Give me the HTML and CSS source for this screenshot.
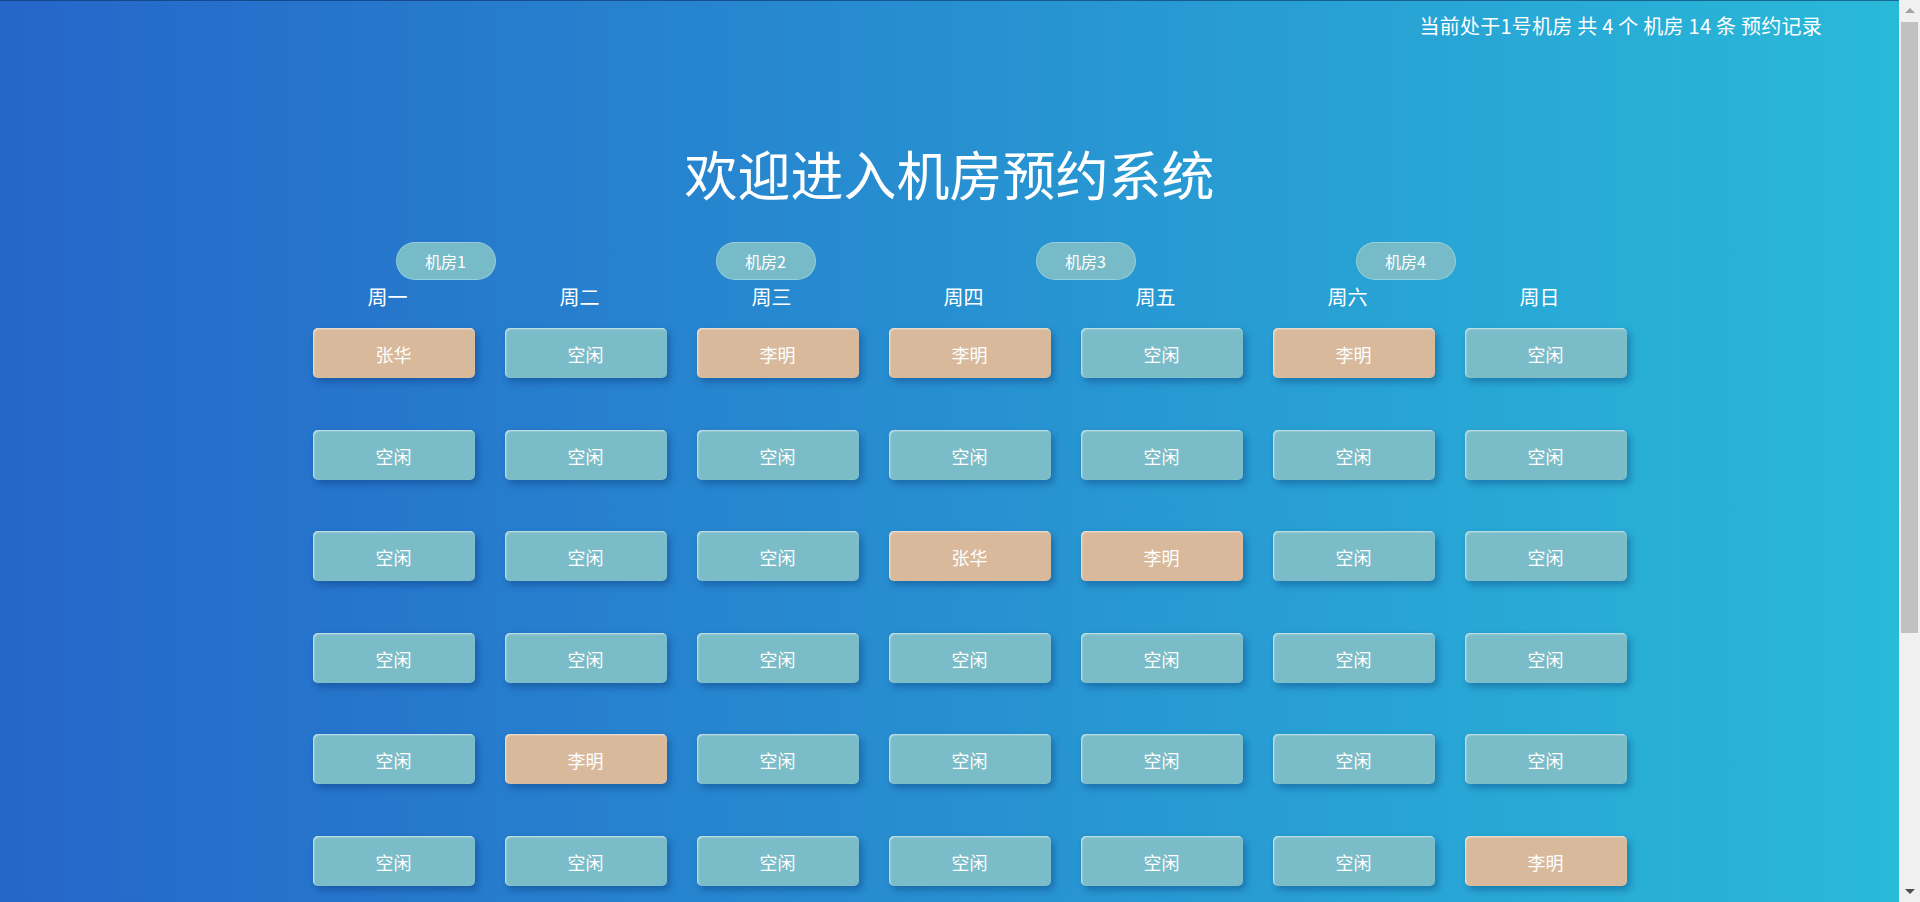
FILE: index.html
```html
<!DOCTYPE html>
<html lang="zh-CN">
<head>
<meta charset="utf-8">
<title>机房预约系统</title>
<link rel="stylesheet" href="styles.css">
</head>
<body>
<div class="page">
  <div class="topbar">当前处于1号机房 共 4 个 机房 14 条 预约记录</div>
  <h1 class="title">欢迎进入机房预约系统</h1>
  <div class="board">
    <div class="rooms">
      <div class="room-cell"><span class="room">机房1</span></div>
      <div class="room-cell"><span class="room">机房2</span></div>
      <div class="room-cell"><span class="room">机房3</span></div>
      <div class="room-cell"><span class="room">机房4</span></div>
    </div>
    <div class="days">
      <div class="day">周一</div>
      <div class="day">周二</div>
      <div class="day">周三</div>
      <div class="day">周四</div>
      <div class="day">周五</div>
      <div class="day">周六</div>
      <div class="day">周日</div>
    </div>
    <div class="grid">
      <div class="cell"><div class="slot booked">张华</div></div>
      <div class="cell"><div class="slot">空闲</div></div>
      <div class="cell"><div class="slot booked">李明</div></div>
      <div class="cell"><div class="slot booked">李明</div></div>
      <div class="cell"><div class="slot">空闲</div></div>
      <div class="cell"><div class="slot booked">李明</div></div>
      <div class="cell"><div class="slot">空闲</div></div>

      <div class="cell"><div class="slot">空闲</div></div>
      <div class="cell"><div class="slot">空闲</div></div>
      <div class="cell"><div class="slot">空闲</div></div>
      <div class="cell"><div class="slot">空闲</div></div>
      <div class="cell"><div class="slot">空闲</div></div>
      <div class="cell"><div class="slot">空闲</div></div>
      <div class="cell"><div class="slot">空闲</div></div>

      <div class="cell"><div class="slot">空闲</div></div>
      <div class="cell"><div class="slot">空闲</div></div>
      <div class="cell"><div class="slot">空闲</div></div>
      <div class="cell"><div class="slot booked">张华</div></div>
      <div class="cell"><div class="slot booked">李明</div></div>
      <div class="cell"><div class="slot">空闲</div></div>
      <div class="cell"><div class="slot">空闲</div></div>

      <div class="cell"><div class="slot">空闲</div></div>
      <div class="cell"><div class="slot">空闲</div></div>
      <div class="cell"><div class="slot">空闲</div></div>
      <div class="cell"><div class="slot">空闲</div></div>
      <div class="cell"><div class="slot">空闲</div></div>
      <div class="cell"><div class="slot">空闲</div></div>
      <div class="cell"><div class="slot">空闲</div></div>

      <div class="cell"><div class="slot">空闲</div></div>
      <div class="cell"><div class="slot booked">李明</div></div>
      <div class="cell"><div class="slot">空闲</div></div>
      <div class="cell"><div class="slot">空闲</div></div>
      <div class="cell"><div class="slot">空闲</div></div>
      <div class="cell"><div class="slot">空闲</div></div>
      <div class="cell"><div class="slot">空闲</div></div>

      <div class="cell"><div class="slot">空闲</div></div>
      <div class="cell"><div class="slot">空闲</div></div>
      <div class="cell"><div class="slot">空闲</div></div>
      <div class="cell"><div class="slot">空闲</div></div>
      <div class="cell"><div class="slot">空闲</div></div>
      <div class="cell"><div class="slot">空闲</div></div>
      <div class="cell"><div class="slot booked">李明</div></div>
    </div>
  </div>
</div>
<div class="scrollbar" aria-hidden="true">
  <div class="sb-btn"><span class="arrow-up"></span></div>
  <div class="sb-track"><div class="sb-thumb"></div></div>
  <div class="sb-btn"><span class="arrow-down"></span></div>
</div>
</body>
</html>
```

FILE: styles.css
```css
html {
  background: linear-gradient(to right, #2566c9, #29bad9);
  background-attachment: fixed;
  overflow: hidden;
}

body {
  margin: 0 21px 0 0;
  font-family: "Noto Sans CJK SC", "Microsoft YaHei", sans-serif;
  color: #ffffff;
  border-top: 1px solid rgba(10, 40, 90, 0.55);
}

.topbar {
  padding: 11px 77px 0 0;
  text-align: right;
  font-size: 20px;
  line-height: 28px;
  letter-spacing: 0.25px;
}

.title {
  margin: 101px 0 0 0;
  text-align: center;
  font-size: 53px;
  font-weight: normal;
  line-height: 64px;
}

.board {
  width: 1344px;
  margin-left: calc(50% - 652px);
}

.rooms {
  display: grid;
  grid-template-columns: repeat(4, 320px);
  margin: 37px 0 0 -12px;
}

.room-cell {
  display: flex;
  justify-content: center;
}

.room {
  display: block;
  box-sizing: border-box;
  width: 100px;
  height: 38px;
  line-height: 36px;
  text-align: center;
  font-size: 16px;
  border-radius: 19px;
  background: #78bbc8;
  border: 1px solid rgba(160, 215, 225, 0.7);
}

.days {
  display: grid;
  grid-template-columns: repeat(7, 192px);
  margin-top: 5px;
}

.day {
  padding-right: 12px;
  text-align: center;
  font-size: 20px;
  line-height: 24px;
}

.grid {
  display: grid;
  grid-template-columns: repeat(7, 192px);
  margin-top: 19px;
}

.cell {
  display: flex;
  justify-content: center;
  padding-bottom: 51.6px;
}

.slot {
  box-sizing: border-box;
  width: 162px;
  height: 50px;
  line-height: 52px;
  text-align: center;
  font-size: 18px;
  border-radius: 5px;
  background: #7abcc8;
  box-shadow: 3px 4px 7px rgba(0, 30, 90, 0.32), inset 1px 1px 2px rgba(255, 255, 255, 0.65);
}

.slot.booked {
  background: #d8b99b;
}

/* window scrollbar drawn over the right edge */
.scrollbar {
  position: fixed;
  top: 0;
  right: 0;
  width: 21px;
  height: 100vh;
  display: flex;
  flex-direction: column;
  background: #f0f0f0;
}

.sb-btn {
  height: 21px;
  display: flex;
  align-items: center;
  justify-content: center;
  flex: none;
}

.arrow-up {
  width: 0;
  height: 0;
  border-left: 5px solid transparent;
  border-right: 5px solid transparent;
  border-bottom: 5px solid #a3a3a3;
}

.arrow-down {
  width: 0;
  height: 0;
  border-left: 5px solid transparent;
  border-right: 5px solid transparent;
  border-top: 5px solid #505050;
}

.sb-track {
  flex: 1;
  padding: 1px 2px 0 2px;
}

.sb-thumb {
  height: 611px;
  background: #c1c1c1;
}
```
